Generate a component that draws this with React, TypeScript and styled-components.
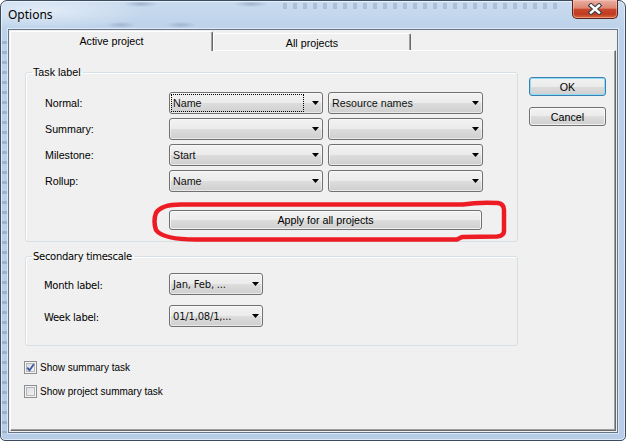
import React from "react";
import styled, { createGlobalStyle } from "styled-components";

const arial = `"Liberation Sans", Arial, sans-serif`;
const tahoma = `"DejaVu Sans", Tahoma, sans-serif`;

const GlobalStyle = createGlobalStyle`
  html, body {
    margin: 0;
    padding: 0;
    background: #ffffff;
  }
  body {
    width: 626px;
    height: 441px;
    overflow: hidden;
  }
`;

type Row = { label: string; first: string; second: string; focused?: boolean };

const taskRows: Row[] = [
  { label: "Normal:", first: "Name", second: "Resource names", focused: true },
  { label: "Summary:", first: "", second: "" },
  { label: "Milestone:", first: "Start", second: "" },
  { label: "Rollup:", first: "Name", second: "" },
];

const scaleRows = [
  { label: "Month label:", value: "Jan, Feb, ..." },
  { label: "Week label:", value: "01/1,08/1,..." },
];

const DropArrow = () => (
  <svg width="7" height="4" viewBox="0 0 7 4">
    <polygon points="0,0 7,0 3.5,4" fill="#000" />
  </svg>
);

const CloseGlyph = () => (
  <svg width="16" height="12" viewBox="0 0 16 12">
    <path d="M4 2.5 L12 9.5 M12 2.5 L4 9.5" stroke="#3a3f47" strokeWidth="4.6" strokeLinecap="square" />
    <path d="M4 2.5 L12 9.5 M12 2.5 L4 9.5" stroke="#ffffff" strokeWidth="2.4" strokeLinecap="square" />
  </svg>
);

const CheckMark = () => (
  <svg width="9" height="9" viewBox="0 0 9 9">
    <path d="M1.2 4.6 L3.5 7.2 L7.8 1.2" fill="none" stroke="#3d58a0" strokeWidth="1.8" />
  </svg>
);

// hand-drawn marker ring around the apply button
const MarkerRing = () => (
  <svg width="356" height="44" viewBox="0 0 356 44">
    <path
      d="M30 5.5 L312 5.5 Q327 3 347 4 Q353 5 353 11 L353 32 Q353 37 346 37.5 L311 38 L306 40.5 L45 40.5 Q12 40.5 5 31 Q2 22 5 14 Q10 5.5 30 5.5 Z"
      fill="none"
      stroke="#ed1c24"
      strokeWidth="4.5"
      strokeLinejoin="round"
    />
  </svg>
);

const Window = styled.div`
  box-sizing: border-box;
  width: 626px;
  height: 441px;
  display: flex;
  flex-direction: column;
  padding: 0 7px 7px 7px;
  border: 1px solid #3b4c60;
  border-radius: 7px 7px 5px 5px;
  box-shadow: inset 0 0 0 1px rgba(255, 255, 255, 0.55);
  background:
    radial-gradient(ellipse 150px 26px at 40px 10px, rgba(255, 255, 255, 0.5), transparent 70%),
    radial-gradient(ellipse 22px 4px at 140px 3px, rgba(70, 90, 120, 0.3), transparent 80%),
    radial-gradient(ellipse 22px 4px at 250px 3px, rgba(70, 90, 120, 0.3), transparent 80%),
    radial-gradient(ellipse 18px 4px at 120px 24px, rgba(70, 90, 120, 0.25), transparent 80%),
    radial-gradient(ellipse 20px 4px at 180px 24px, rgba(70, 90, 120, 0.25), transparent 80%),
    repeating-linear-gradient(90deg, rgba(80, 100, 130, 0.22) 0 4px, transparent 4px 10px) 282px 2px / 280px 6px no-repeat,
    repeating-linear-gradient(180deg, rgba(90, 110, 140, 0.3) 0 3px, transparent 3px 10px) 1px 40px / 5px 392px no-repeat,
    linear-gradient(180deg, #c9dbef 0px, #bcd2ea 30px, #b7cde7 100%);
`;

const TitleBar = styled.div`
  height: 28px;
  display: flex;
  align-items: flex-start;
  flex-shrink: 0;
`;

const Title = styled.div`
  margin-top: 6px;
  font: 12px "Noto Sans", "Open Sans", sans-serif;
  line-height: 16px;
  color: #000;
`;

const CloseButton = styled.div`
  box-sizing: border-box;
  margin-left: auto;
  margin-top: -1px;
  width: 46px;
  height: 19px;
  display: flex;
  align-items: center;
  justify-content: center;
  border: 1px solid #5c231a;
  border-top: none;
  border-radius: 0 0 5px 5px;
  background: linear-gradient(180deg, #eab0a2 0%, #dc8672 45%, #c9482d 52%, #c03a20 78%, #d8693f 100%);
  box-shadow: inset 0 0 0 1px rgba(255, 210, 200, 0.45);
`;

const Client = styled.div`
  flex: 1;
  display: flex;
  flex-direction: column;
  padding: 1px;
  border: 1px solid #66768a;
  box-shadow: 0 0 0 1px rgba(255, 255, 255, 0.5);
  background: #f0f0f0;
`;

const TabStrip = styled.div`
  height: 19px;
  display: flex;
  align-items: flex-end;
  flex-shrink: 0;
`;

const Tab = styled.div<{ $w: number; $active?: boolean }>`
  box-sizing: border-box;
  position: relative;
  z-index: ${p => (p.$active ? 1 : 0)};
  width: ${p => p.$w}px;
  height: ${p => (p.$active ? 20 : 17)}px;
  margin-bottom: ${p => (p.$active ? -1 : 0)}px;
  display: flex;
  justify-content: center;
  padding-top: 3px;
  border-top: 1px solid #ffffff;
  border-left: 1px solid #ffffff;
  border-right: 1px solid #696969;
  border-radius: 2px 2px 0 0;
  box-shadow: inset -1px 0 0 #a0a0a0;
  background: #f0f0f0;
  font: 10.7px ${arial};
  line-height: 13px;
  color: #000;
`;

const TabPanel = styled.div`
  flex: 1;
  box-sizing: border-box;
  display: flex;
  align-items: flex-start;
  padding: 15px 0 0 14px;
  border-top: 1px solid #ffffff;
  border-left: 1px solid #ffffff;
  border-right: 1px solid #696969;
  border-bottom: 1px solid #696969;
  box-shadow: inset -1px -1px 0 #a0a0a0;
`;

const MainCol = styled.div`
  width: 493px;
  display: flex;
  flex-direction: column;
`;

const SideCol = styled.div`
  margin: 11px 0 0 11px;
  display: flex;
  flex-direction: column;
  gap: 11px;
`;

const Group = styled.fieldset<{ $face: string; $pad: string; $gap?: number }>`
  margin: ${p => (p.$gap ? `${p.$gap}px 0 0 0` : "0")};
  padding: ${p => p.$pad};
  min-width: 0;
  border: 1px solid #d5dfe5;
  border-radius: 3px;
  box-shadow: inset 1px 1px 0 #ffffff;
  font-family: ${p => p.$face};
`;

const Legend = styled.legend<{ $size: number; $track?: number }>`
  margin-left: 6px;
  padding: 0 2px 0 1px;
  font-size: ${p => p.$size}px;
  letter-spacing: ${p => p.$track ?? 0}px;
  line-height: 13px;
  color: #000;
`;

const GroupBody = styled.div<{ $inset: number }>`
  padding-left: ${p => p.$inset}px;
`;

const FieldGrid = styled.div<{ $cols: string; $rowGap: number }>`
  display: grid;
  grid-template-columns: ${p => p.$cols};
  column-gap: 5px;
  row-gap: ${p => p.$rowGap}px;
`;

const FieldLabel = styled.div<{ $size: number; $drop?: number; $track?: number }>`
  align-self: center;
  padding-top: ${p => p.$drop ?? 0}px;
  font-size: ${p => p.$size}px;
  letter-spacing: ${p => p.$track ?? 0}px;
  line-height: 13px;
  color: #000;
  white-space: nowrap;
`;

const Combo = styled.div`
  box-sizing: border-box;
  height: 22px;
  display: flex;
  align-items: stretch;
  border: 1px solid #707070;
  border-radius: 3px;
  background: linear-gradient(180deg, #f2f2f2 0%, #ebebeb 50%, #dddddd 50%, #cfcfcf 100%);
  box-shadow: inset 0 0 0 1px rgba(255, 255, 255, 0.55);
`;

const ComboValue = styled.div<{ $focused?: boolean; $size: number; $track?: number }>`
  flex: 1;
  min-width: 0;
  margin: 1px 4px 1px 1px;
  padding-left: 1px;
  display: flex;
  align-items: center;
  border: 1px dotted ${p => (p.$focused ? "#000" : "transparent")};
  font-size: ${p => p.$size}px;
  letter-spacing: ${p => p.$track ?? 0}px;
  color: #111;
  white-space: nowrap;
  overflow: hidden;
`;

const ArrowBox = styled.div`
  width: 14px;
  display: flex;
  align-items: center;
  justify-content: center;
`;

const ApplyRow = styled.div`
  position: relative;
  margin: 18px 0 0 124px;
  width: 313px;
`;

const Marker = styled.div`
  position: absolute;
  left: -18px;
  top: -11px;
  pointer-events: none;
  line-height: 0;
`;

const PushButton = styled.button<{ $w: number; $h: number; $default?: boolean }>`
  box-sizing: border-box;
  width: ${p => p.$w}px;
  height: ${p => p.$h}px;
  padding: 0;
  display: flex;
  align-items: center;
  justify-content: center;
  border: 1px solid ${p => (p.$default ? "#3c7fb1" : "#707070")};
  border-radius: 3px;
  background: linear-gradient(180deg, #f2f2f2 0%, #ebebeb 50%, #dddddd 50%, #cfcfcf 100%);
  box-shadow: inset 0 0 0 1px ${p => (p.$default ? "#8fdcf7" : "rgba(255, 255, 255, 0.7)")};
  font: 10.7px ${arial};
  color: #000;
`;

const CheckList = styled.div`
  margin: 15px 0 0 -1px;
  display: flex;
  flex-direction: column;
  gap: 11px;
`;

const CheckRow = styled.label`
  height: 13px;
  display: flex;
  align-items: center;
  gap: 3px;
  font: 10px ${arial};
  color: #000;
`;

const CheckBox = styled.span`
  box-sizing: border-box;
  width: 13px;
  height: 13px;
  display: flex;
  align-items: center;
  justify-content: center;
  border: 1px solid #8e8f8f;
  box-shadow: inset 0 0 0 1px #f4f4f4, inset 0 0 0 2px #b4b8bd;
  background-image: linear-gradient(135deg, #d6d9dd, #f6f6f6);
`;

const App = () => (
  <>
    <GlobalStyle />
    <Window>
      <TitleBar>
        <Title>Options</Title>
        <CloseButton>
          <CloseGlyph />
        </CloseButton>
      </TitleBar>
      <Client>
        <TabStrip>
          <Tab $w={203} $active>Active project</Tab>
          <Tab $w={198}>All projects</Tab>
        </TabStrip>
        <TabPanel>
          <MainCol>
            <Group $face={arial} $pad="13px 0 11px 0">
              <Legend $size={10.7}>Task label</Legend>
              <GroupBody $inset={19}>
                <FieldGrid $cols="119px 154px 155px" $rowGap={4}>
                  {taskRows.map(row => (
                    <React.Fragment key={row.label}>
                      <FieldLabel $size={10.7}>{row.label}</FieldLabel>
                      <Combo>
                        <ComboValue $size={10.7} $focused={row.focused}>{row.first}</ComboValue>
                        <ArrowBox><DropArrow /></ArrowBox>
                      </Combo>
                      <Combo>
                        <ComboValue $size={10.7}>{row.second}</ComboValue>
                        <ArrowBox><DropArrow /></ArrowBox>
                      </Combo>
                    </React.Fragment>
                  ))}
                </FieldGrid>
                <ApplyRow>
                  <PushButton $w={313} $h={20}>Apply for all projects</PushButton>
                  <Marker><MarkerRing /></Marker>
                </ApplyRow>
              </GroupBody>
            </Group>
            <Group $face={tahoma} $pad="10px 0 18px 0" $gap={8}>
              <Legend $size={10} $track={-0.3}>Secondary timescale</Legend>
              <GroupBody $inset={18}>
                <FieldGrid $cols="120px 94px" $rowGap={10}>
                  {scaleRows.map(row => (
                    <React.Fragment key={row.label}>
                      <FieldLabel $size={10} $track={-0.3} $drop={3}>{row.label}</FieldLabel>
                      <Combo>
                        <ComboValue $size={10} $track={-0.2}>{row.value}</ComboValue>
                        <ArrowBox><DropArrow /></ArrowBox>
                      </Combo>
                    </React.Fragment>
                  ))}
                </FieldGrid>
              </GroupBody>
            </Group>
            <CheckList>
              <CheckRow>
                <CheckBox><CheckMark /></CheckBox>
                Show summary task
              </CheckRow>
              <CheckRow>
                <CheckBox />
                Show project summary task
              </CheckRow>
            </CheckList>
          </MainCol>
          <SideCol>
            <PushButton $w={77} $h={19} $default>OK</PushButton>
            <PushButton $w={77} $h={19}>Cancel</PushButton>
          </SideCol>
        </TabPanel>
      </Client>
    </Window>
  </>
);

export default App;
